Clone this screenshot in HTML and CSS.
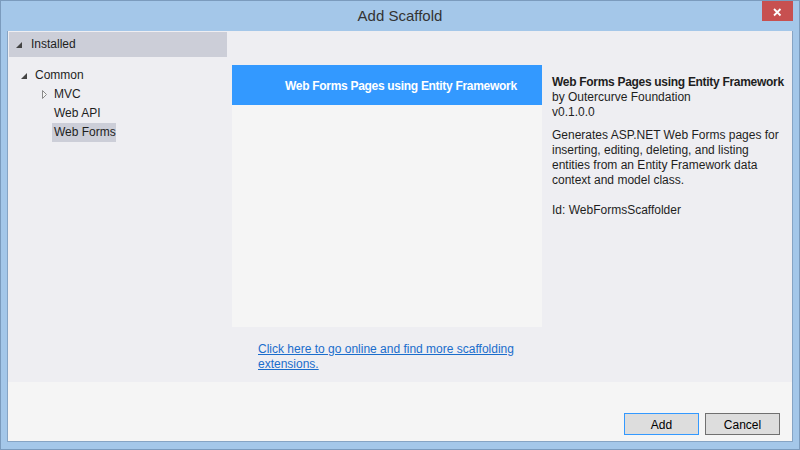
FILE: index.html
```html
<!DOCTYPE html>
<html lang="en">
<head>
<meta charset="utf-8">
<title>Add Scaffold</title>
<link rel="stylesheet" href="styles.css">
</head>
<body>
<div class="window">
  <div class="titlebar">
    <div class="tb-spacer"></div>
    <div class="title">Add Scaffold</div>
    <div class="tb-right">
      <div class="close" title="Close">
        <svg width="31" height="20" viewBox="0 0 31 20"><path d="M12 8 L18.5 14.5 M18.5 8 L12 14.5" stroke="#fff" stroke-width="1.8" fill="none"/></svg>
      </div>
    </div>
  </div>
  <div class="client">
    <div class="main">
      <div class="tree-pane">
        <div class="tree-header">
          <svg class="tri" width="6" height="6" viewBox="0 0 6 6"><polygon points="6,0 6,6 0,6" fill="#444"/></svg>
          <span>Installed</span>
        </div>
        <ul class="tree">
          <li class="node lvl1">
            <svg class="tri" width="6" height="6" viewBox="0 0 6 6"><polygon points="6,0 6,6 0,6" fill="#444"/></svg>
            <span class="label">Common</span>
          </li>
          <li class="node lvl2">
            <span class="toggle"><svg width="6" height="9" viewBox="0 0 6 9"><polygon points="0.5,0.5 4.5,4.5 0.5,8.5" fill="#f4f4f4" stroke="#8a8a8a" stroke-width="1"/></svg></span>
            <span class="label">MVC</span>
          </li>
          <li class="node lvl2">
            <span class="toggle"></span>
            <span class="label">Web API</span>
          </li>
          <li class="node lvl2">
            <span class="toggle"></span>
            <span class="label selected">Web Forms</span>
          </li>
        </ul>
      </div>
      <div class="center">
        <div class="list">
          <div class="list-item active">Web Forms Pages using Entity Framework</div>
        </div>
        <a class="online-link" href="#">Click here to go online and find more scaffolding extensions.</a>
      </div>
      <div class="details">
        <div class="d-title">Web Forms Pages using Entity Framework</div>
        <div>by Outercurve Foundation</div>
        <div>v0.1.0.0</div>
        <p class="d-desc">Generates ASP.NET Web Forms pages for inserting, editing, deleting, and listing entities from an Entity Framework data context and model class.</p>
        <p class="d-id">Id: WebFormsScaffolder</p>
      </div>
    </div>
    <div class="footer">
      <button class="btn primary">Add</button>
      <button class="btn">Cancel</button>
    </div>
  </div>
</div>
</body>
</html>
```
FILE: styles.css
```css
html, body {
  margin: 0;
  padding: 0;
}
body {
  font-family: "Liberation Sans", Arial, sans-serif;
  font-size: 12px;
  color: #1e1e1e;
}
.window {
  width: 800px;
  height: 450px;
  box-sizing: border-box;
  background: #a4c7e9;
  border: 1px solid #7b9bbd;
  padding: 0 6px 7px 6px;
  display: flex;
  flex-direction: column;
}
.titlebar {
  height: 30px;
  flex: none;
  display: grid;
  grid-template-columns: 1fr auto 1fr;
}
.title {
  font-size: 15px;
  line-height: 30px;
  color: #333;
}
.tb-right {
  display: flex;
  justify-content: flex-end;
  align-items: flex-start;
}
.close {
  width: 31px;
  height: 20px;
  background: #c75050;
}
.close svg {
  display: block;
}
.client {
  flex: 1;
  display: flex;
  flex-direction: column;
  border: 1px solid #86a4c4;
  border-top: none;
  background: #f5f5f5;
}
.main {
  height: 351px;
  flex: none;
  background: #eeeef2;
  display: grid;
  grid-template-columns: 224px 310px 1fr;
}
.tree-header {
  margin: 1px 0 0 1px;
  width: 218px;
  height: 25px;
  background: #ccced8;
  display: flex;
  align-items: center;
  line-height: 27px;
}
.tree-header .tri {
  margin: 0 9px 0 7px;
}
.tree {
  list-style: none;
  margin: 9px 0 0 0;
  padding: 0;
}
.node {
  height: 19px;
  line-height: 19px;
  display: flex;
  align-items: center;
}
.node.lvl1 {
  padding-left: 13px;
}
.node.lvl1 .tri {
  margin-right: 6px;
}
.node.lvl2 {
  padding-left: 34px;
}
.toggle {
  width: 10px;
  height: 19px;
  display: flex;
  align-items: center;
}
.toggle svg {
  display: block;
}
.label {
  padding: 0 0 0 2px;
}
.label.selected {
  background: #ccced8;
}
.center {
  padding: 34px 0 0 0;
}
.list {
  height: 262px;
  background: #f5f5f5;
}
.list-item.active {
  height: 40px;
  line-height: 42px;
  background: #3399ff;
  color: #fff;
  font-weight: bold;
  letter-spacing: -0.3px;
  padding-left: 53px;
  overflow: hidden;
}
.online-link {
  display: block;
  margin: 15px 0 0 26px;
  width: 280px;
  line-height: 15px;
  color: #1a6dcc;
  text-decoration: underline;
}
.details {
  padding: 44px 0 0 10px;
  line-height: 15px;
  width: 232px;
}
.d-title {
  font-weight: bold;
  letter-spacing: -0.3px;
  white-space: nowrap;
}
.d-desc {
  margin: 8px 0 0 0;
}
.d-id {
  margin: 15px 0 0 0;
}
.footer {
  flex: 1;
  display: flex;
  justify-content: flex-end;
  align-items: flex-end;
  gap: 6px;
  padding: 0 12px 6px 0;
}
.btn {
  width: 75px;
  height: 22px;
  box-sizing: border-box;
  margin: 0;
  padding: 2px 0 0 0;
  background: #dddddd;
  border: 1px solid #707070;
  font-family: "Liberation Sans", Arial, sans-serif;
  font-size: 12px;
  color: #000;
}
.btn.primary {
  border-color: #3399ff;
}
```
